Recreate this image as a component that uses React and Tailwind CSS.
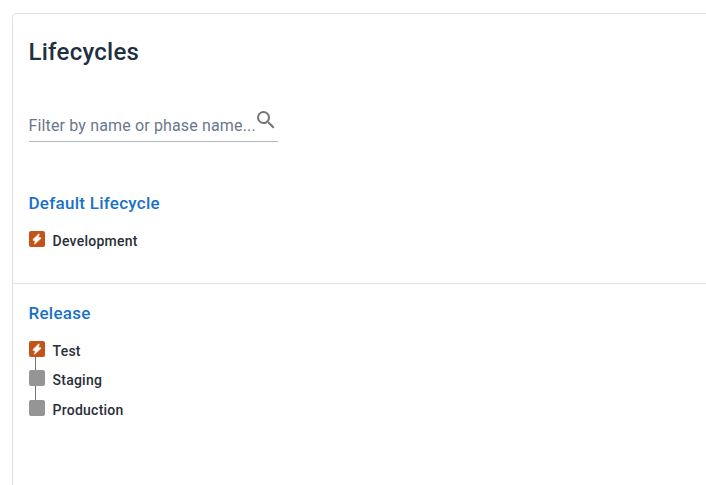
import { MdSearch } from "react-icons/md";

function PhaseIcon({ auto, last }) {
  return (
    <div className="relative h-4 w-4 shrink-0">
      <div className={`flex h-4 w-4 items-center justify-center rounded-[2px] ${auto ? "bg-[#c4531a]" : "bg-[#959595]"}`}>
        {auto && (
          <svg viewBox="0 0 16 16" className="h-4 w-4" fill="#fff" stroke="#fff" strokeWidth="0.5" strokeLinejoin="round">
            <path d="M9.6 2.9 4 8.4v.9l2.4.6-1.2 3.2h.6L11.9 7.6v-.9l-2.5-.5.9-3.1z" />
          </svg>
        )}
      </div>
      {!last && <div className="absolute top-4 left-[6px] h-[14px] w-px bg-[#757575]" />}
    </div>
  );
}

function Lifecycle({ name, phases, className }) {
  return (
    <section className={`pl-4 ${className}`}>
      <h2 className="-ml-[0.5px] text-[17px] leading-6 font-medium tracking-[0.27px] text-[#1a71c7]">{name}</h2>
      <ul className="mt-4">
        {phases.map((phase, i) => (
          <li key={phase} className={`flex items-start gap-[7.5px] ${i === 1 ? "h-[30px]" : "h-[29px]"}`}>
            <PhaseIcon auto={i === 0} last={i === phases.length - 1} />
            <span className="mt-px text-sm leading-[18px] font-medium tracking-[0.25px] text-[#282f38]">{phase}</span>
          </li>
        ))}
      </ul>
    </section>
  );
}

export default function App() {
  return (
    <div className="h-[485px] overflow-hidden bg-white pt-[13px] pl-3 font-['Roboto',sans-serif]">
      <main className="h-[500px] w-[720px] rounded-[4px] border border-[#dfe1e5]">
        <h1 className="pt-[22px] pl-[15.5px] text-2xl leading-8 font-medium tracking-[0.25px] text-[#1f303f]">Lifecycles</h1>
        <div className="mt-[38px] ml-4 flex h-9 w-[249px] items-start border-b border-[#aeb5be]">
          <span className="-ml-[0.5px] mt-2 w-[227.5px] text-base leading-6 tracking-[0.15px] whitespace-nowrap text-[#68778d]">
            Filter by name or phase name...
          </span>
          <MdSearch className="-ml-0.5 mt-0.5 h-6 w-6 shrink-0 text-[#757575]" />
        </div>
        <Lifecycle name="Default Lifecycle" phases={["Development"]} className="h-[142px] border-b border-[#dfe1e5] pt-[49px]" />
        <Lifecycle name="Release" phases={["Test", "Staging", "Production"]} className="pt-[17px]" />
      </main>
    </div>
  );
}
